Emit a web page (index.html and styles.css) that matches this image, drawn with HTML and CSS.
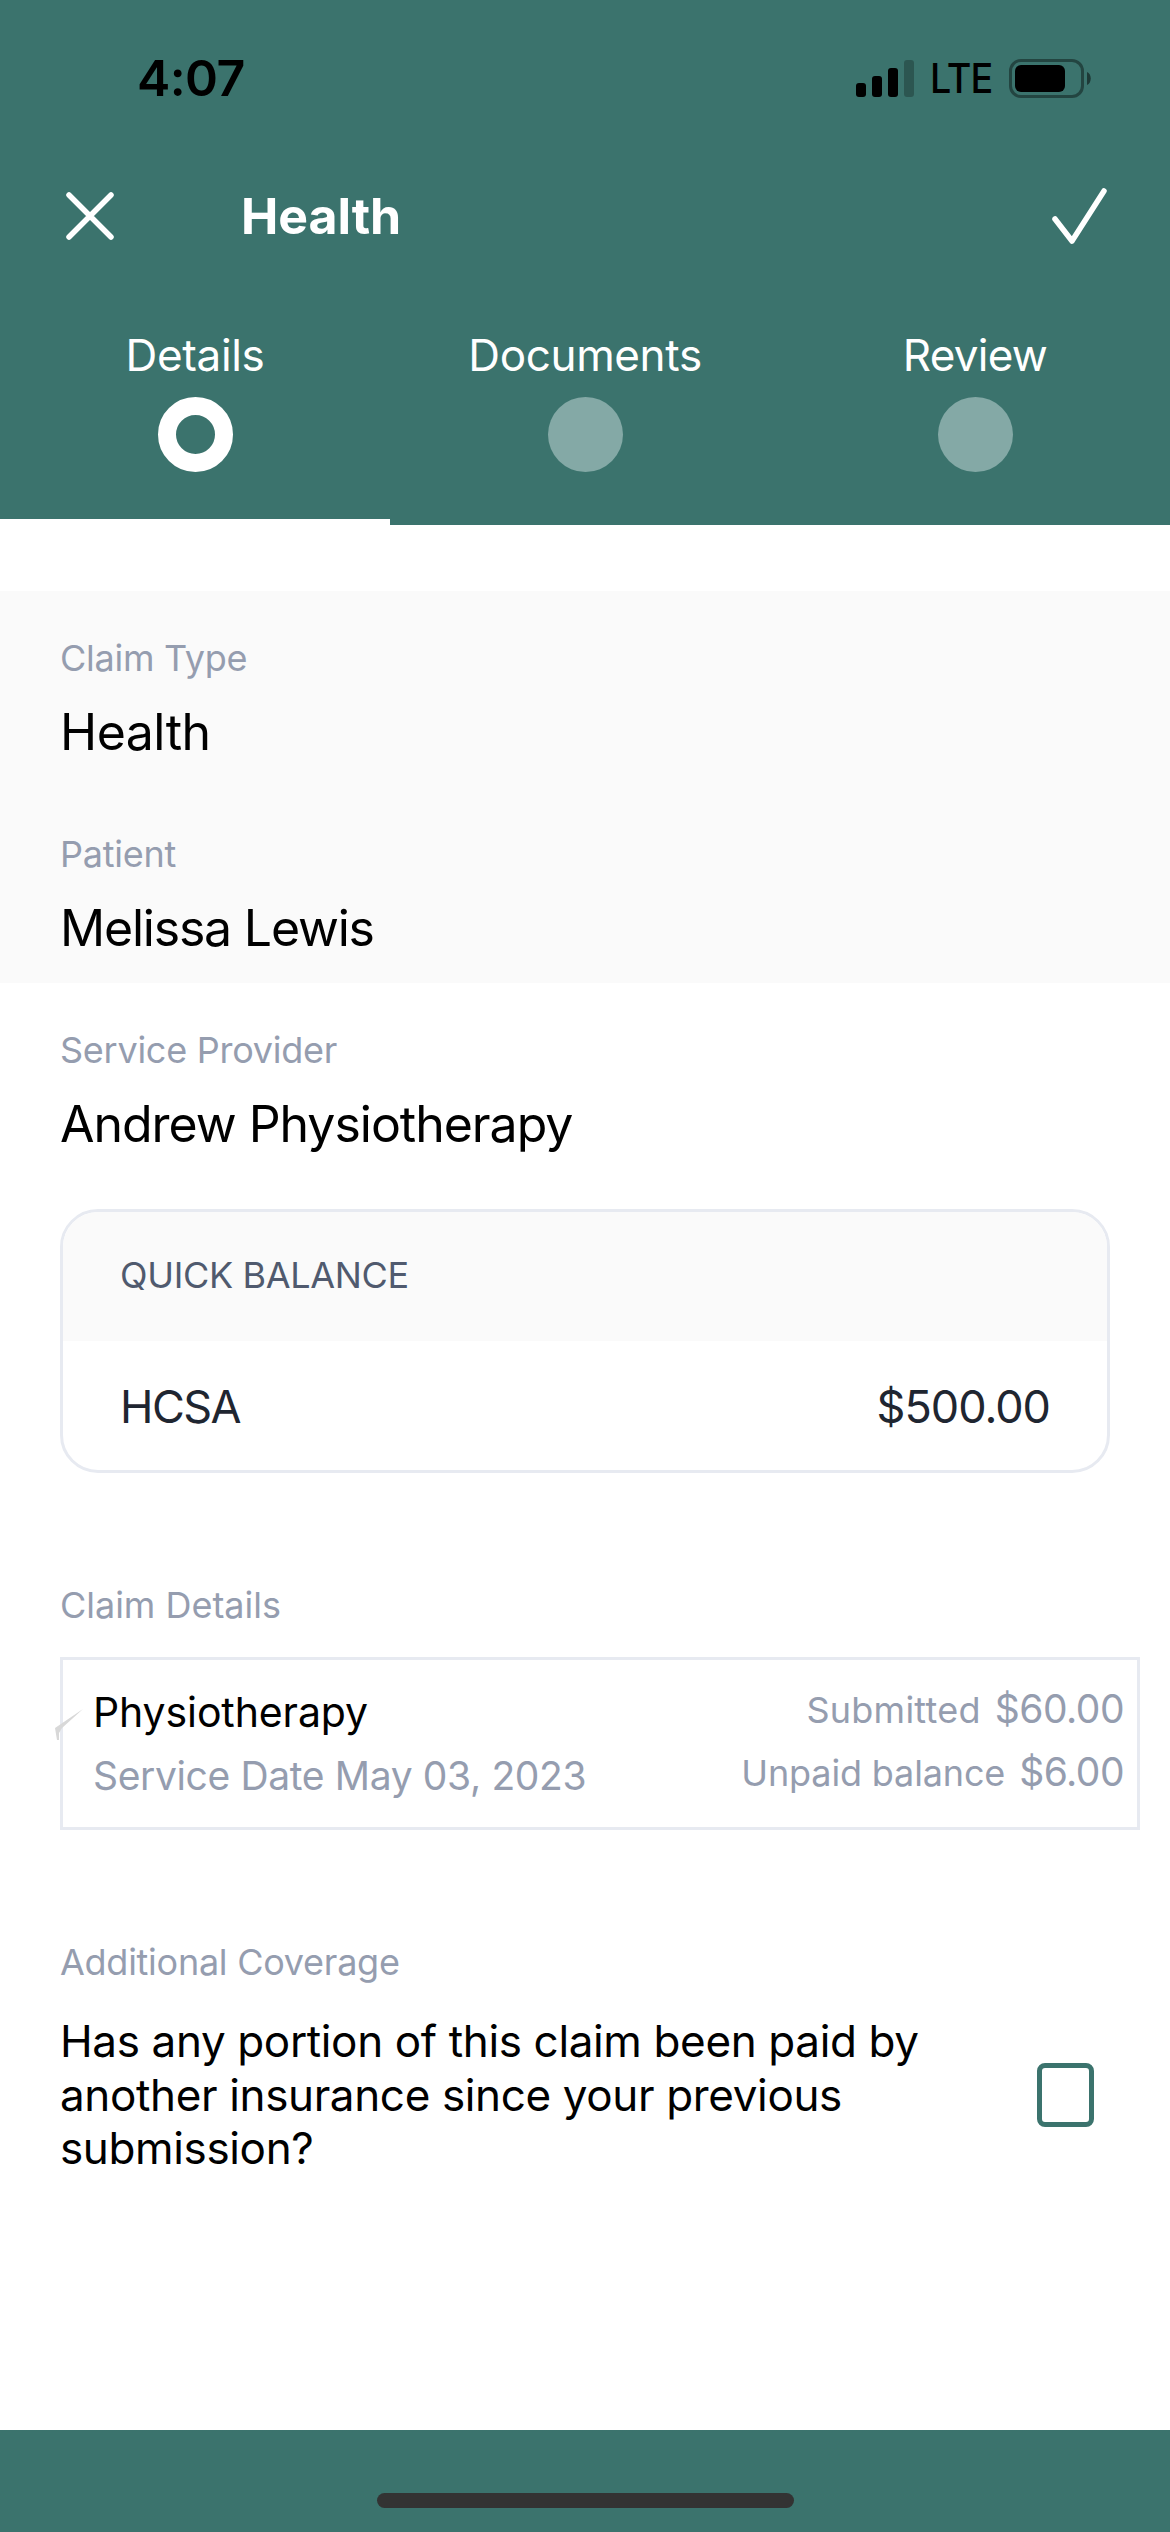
FILE: index.html
```
<!DOCTYPE html>
<html lang="en">
  <head>
    <meta charset="UTF-8" />
    <title>Health</title>
    <link rel="stylesheet" href="styles.css">
  </head>
  <body>
    <header class="header">
      <div class="status-bar">
        <span class="time">4:07</span>
        <svg class="signal" width="58" height="37" viewBox="0 0 58 37">
          <rect x="0" y="23" width="10" height="14" rx="3" />
          <rect x="16" y="16" width="10" height="21" rx="3" />
          <rect x="32" y="8" width="10" height="29" rx="3" />
          <rect x="48" y="0" width="10" height="37" rx="3" opacity="0.25" />
        </svg>
        <span class="network">LTE</span>
        <svg class="battery" width="82" height="39" viewBox="0 0 82 39">
          <rect x="1.5" y="1.5" width="72" height="36" rx="10.5" fill="none" stroke="#000" stroke-opacity="0.4" stroke-width="3" />
          <rect x="6" y="6" width="50" height="27" rx="6" />
          <path d="M78 13c5 2 5 11 0 13z" opacity="0.5" />
        </svg>
      </div>

      <div class="toolbar">
        <svg width="48" height="48" viewBox="0 0 48 48">
          <path d="M3 3L45 45M45 3L3 45" />
        </svg>
        <h1>Health</h1>
        <svg class="check" width="56" height="56" viewBox="0 0 56 56">
          <path d="M4 31L21 53L53 3" />
        </svg>
      </div>

      <div class="tabs">
        <div class="tab active">
          <span>Details</span>
          <div class="dot"></div>
        </div>
        <div class="tab">
          <span class="tab-documents">Documents</span>
          <div class="dot"></div>
        </div>
        <div class="tab">
          <span class="tab-review">Review</span>
          <div class="dot"></div>
        </div>
      </div>
    </header>

    <main>
      <div class="field locked">
        <div class="label">Claim Type</div>
        <div class="value short">Health</div>
      </div>
      <div class="field locked">
        <div class="label">Patient</div>
        <div class="value">Melissa Lewis</div>
      </div>
      <div class="field">
        <div class="label">Service Provider</div>
        <div class="value provider">Andrew Physiotherapy</div>
      </div>

      <div class="balance">
        <div class="balance-title">QUICK BALANCE</div>
        <div class="balance-row">
          <span class="plan">HCSA</span>
          <span>$500.00</span>
        </div>
      </div>

      <div class="label section-label details-label">Claim Details</div>
      <div class="claim">
        <svg class="mark" width="30" height="34" viewBox="0 0 30 34">
          <path d="M29 1L1 20L3 32H5V25L8 20Z" />
        </svg>
        <div class="claim-left">
          <div class="service">Physiotherapy</div>
          <div class="date">Service Date May 03, 2023</div>
        </div>
        <div class="claim-right">
          <div><span class="submitted">Submitted</span><b>$60.00</b></div>
          <div><span>Unpaid balance</span><b>$6.00</b></div>
        </div>
      </div>

      <div class="label section-label">Additional Coverage</div>
      <div class="coverage">
        <p>Has any portion of this claim been paid by<br />another insurance since your previous<br />submission?</p>
        <div class="checkbox"></div>
      </div>
    </main>

    <footer class="footer">
      <div class="home-indicator"></div>
    </footer>
  </body>
</html>
```
FILE: styles.css
```
* {
  box-sizing: border-box;
}

body {
  margin: 0;
  height: 2532px;
  display: flex;
  flex-direction: column;
  background-color: white;
  font-family: Inter, sans-serif;
  color: #000;
}

svg {
  display: block;
  flex: none;
}

.header {
  height: 525px;
  background-color: #3b736d;
  color: white;
}

.status-bar {
  height: 140px;
  padding: 16px 79px 0 137px;
  display: flex;
  align-items: center;
  color: #000;
}

.time {
  margin-right: auto;
  font-size: 50px;
  font-weight: 600;
  letter-spacing: -0.58px;
}

.network {
  margin-left: 16px;
  width: 60px;
  font-size: 41px;
  font-weight: 500;
  letter-spacing: -1px;
  transform: scaleX(0.92);
  transform-origin: left;
}

.battery {
  margin-left: 19px;
}

.toolbar {
  height: 152px;
  padding: 0 63px 0 66px;
  display: flex;
  align-items: center;
}

.toolbar path {
  fill: none;
  stroke: white;
  stroke-width: 5.5;
  stroke-linecap: round;
  stroke-linejoin: round;
}

.toolbar h1 {
  margin: 0 auto 0 127px;
  font-size: 50px;
  font-weight: 700;
  letter-spacing: -0.07px;
}

.tabs {
  height: 233px;
  display: grid;
  grid-template-columns: repeat(3, 1fr);
}

.tab {
  padding-top: 36px;
  display: flex;
  flex-direction: column;
  align-items: center;
  font-size: 44px;
  line-height: 54px;
  letter-spacing: -0.35px;
}

.tab-review {
  letter-spacing: -0.74px;
}

.tab.active {
  border-bottom: 6px solid white;
}

.dot {
  width: 75px;
  height: 75px;
  margin-top: 15px;
  border-radius: 50%;
  background-color: #84a9a6;
}

.active .dot {
  background-color: transparent;
  border: 18.5px solid white;
}

main {
  padding-top: 66px;
}

.field {
  height: 196px;
  padding: 43px 60px 0;
}

.locked {
  background-color: #fafafa;
}

.label {
  font-size: 36px;
  line-height: 48px;
  letter-spacing: -0.26px;
  color: #959daf;
}

.value {
  margin-top: 20px;
  font-size: 50px;
  line-height: 60px;
  letter-spacing: -1.2px;
}

.value.short {
  letter-spacing: -0.5px;
}

.value.provider {
  letter-spacing: -1.03px;
}

.balance {
  height: 264px;
  margin: 30px 60px 0;
  border: 3px solid #e7eaf1;
  border-radius: 38px;
  overflow: hidden;
}

.balance-title {
  height: 129px;
  padding: 0 57px 3px;
  background-color: #fafafa;
  font-size: 36px;
  line-height: 126px;
  letter-spacing: -0.34px;
  color: #505a6e;
}

.balance-row {
  height: 129px;
  padding: 2px 57px 0;
  display: flex;
  align-items: center;
  justify-content: space-between;
  font-size: 45px;
  letter-spacing: -1.01px;
  color: #1f2631;
}

.plan {
  letter-spacing: -1.56px;
}

.section-label {
  margin: 108px 60px 28px;
}

.details-label {
  letter-spacing: -0.02px;
}

.claim {
  position: relative;
  isolation: isolate;
  height: 173px;
  margin: 0 30px 0 60px;
  padding: 19px 13px 0 30px;
  border: 3px solid #e7eaf1;
  display: flex;
  justify-content: space-between;
}

/* sits behind the left border of the claim box */
.mark {
  position: absolute;
  left: -9px;
  top: 48px;
  z-index: -1;
  fill: #d8d8d8;
}

.claim-left {
  padding-top: 3px;
}

.service {
  font-size: 41px;
  line-height: 60px;
  letter-spacing: -0.11px;
}

.date {
  margin-top: 4px;
  font-size: 39px;
  line-height: 60px;
  letter-spacing: -0.36px;
  color: #959daf;
}

.claim-right {
  display: flex;
  flex-direction: column;
  gap: 2px;
  color: #959daf;
}

.claim-right div {
  display: flex;
  align-items: baseline;
  justify-content: flex-end;
  gap: 14px;
  font-size: 36px;
  line-height: 60px;
  letter-spacing: -0.15px;
}

.claim-right .submitted {
  letter-spacing: 0.25px;
}

.claim-right b {
  font-size: 39px;
  font-weight: 400;
  letter-spacing: -0.5px;
}

.coverage {
  padding: 1px 76px 0 60px;
  display: flex;
  align-items: center;
  justify-content: space-between;
}

.coverage p {
  margin: 0;
  font-size: 44px;
  line-height: 53.6px;
  letter-spacing: -0.36px;
}

.checkbox {
  width: 57px;
  height: 64px;
  border: 5px solid #3b736d;
  border-radius: 8px;
}

.footer {
  height: 102px;
  margin-top: auto;
  padding-top: 63px;
  background-color: #3b736d;
}

.home-indicator {
  width: 417px;
  height: 15px;
  margin: 0 auto;
  border-radius: 8px;
  background-color: #333;
}
```
